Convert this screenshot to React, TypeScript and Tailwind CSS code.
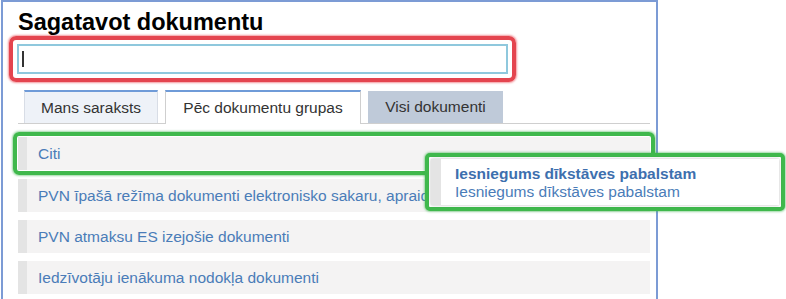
import React from "react";

const rows = [
  "PVN īpašā režīma dokumenti elektronisko sakaru, apraides un elektroniski sniegtajiem pakalpojumiem",
  "PVN atmaksu ES izejošie dokumenti",
  "Iedzīvotāju ienākuma nodokļa dokumenti",
];

function Row({ text }: { text: string }) {
  return (
    <div className="flex h-[33px] bg-[#f4f3f3]">
      <div className="w-[9px] shrink-0 bg-[#e4e4e4]" />
      <div className="flex items-center pl-[11px] pr-2 text-[15.5px] text-[#4a7cb8] whitespace-nowrap overflow-hidden">
        {text}
      </div>
    </div>
  );
}

export default function App() {
  return (
    <div
      className="relative w-[786px] h-[299px] bg-white overflow-hidden"
      style={{ fontFamily: '"Liberation Sans", Arial, sans-serif' }}
    >
      <div className="ml-[1px] w-[657px] h-[299px] border-l-2 border-t-2 border-r-2 border-[#7c9bd5] pl-[15px] pr-[5px] pt-[7px]">
        <h1 className="text-[23.5px] leading-[26px] font-bold text-black">Sagatavot dokumentu</h1>
        <div className="mt-[1px] -ml-[9px] w-[507px] rounded-[7px] border-[4px] border-[#e4454f] p-[4px] shadow-[0_0_2px_1px_rgba(235,80,90,0.6)]">
          <div className="h-[30px] border-2 border-[#8fc8dd] bg-white flex items-center pl-[3px]">
            <div className="w-[1.5px] h-[16px] bg-[#333]" />
          </div>
        </div>
        <div className="mt-[8px] flex items-end border-b border-[#cfcfcf] pl-[6px] gap-[7px] h-[34px] mr-[1px]">
          <div className="h-[33px] w-[134px] bg-[#eef2f8] border-t-2 border-[#6f9bd8] border-l border-r border-l-[#d8dde6] border-r-[#d8dde6] flex items-center justify-center text-[15.5px] text-[#333]">
            Mans saraksts
          </div>
          <div className="h-[34px] w-[196px] bg-white border-t-2 border-[#6f9bd8] border-l border-r border-l-[#cfcfcf] border-r-[#cfcfcf] -mb-px flex items-center justify-center text-[15.5px] text-[#333]">
            Pēc dokumentu grupas
          </div>
          <div className="h-[32px] w-[135px] bg-[#bfcad9] flex items-center justify-center text-[15.5px] text-[#333]">
            Visi dokumenti
          </div>
        </div>
        <div className="mt-[12px] flex flex-col gap-[8px] mr-[1px]">
          <div className="-mx-[5px] -my-[4px] rounded-[6px] border-[4px] border-[#3fb84c] p-[1px] shadow-[0_0_2px_1px_rgba(60,180,75,0.5)]">
            <Row text="Citi" />
          </div>
          {rows.map((r) => (
            <Row key={r} text={r} />
          ))}
        </div>
      </div>

      <div className="absolute left-[425px] top-[153px] w-[360px] h-[58px] rounded-[5px] border-[4px] border-[#3fb84c] p-[2px] shadow-[0_0_2px_1px_rgba(60,180,75,0.5)] bg-white">
        <div className="flex h-full bg-white shadow-[0_0_3px_rgba(0,0,0,0.25)]">
          <div className="w-[10px] bg-[#e4e4e4]" />
          <div className="flex flex-col justify-center pl-[14px] pt-[2px] text-[#3d6fae] text-[15.5px] leading-[18px]">
            <div className="font-bold">Iesniegums dīkstāves pabalstam</div>
            <div className="text-[#4a7cb8]">Iesniegums dīkstāves pabalstam</div>
          </div>
        </div>
      </div>
    </div>
  );
}
